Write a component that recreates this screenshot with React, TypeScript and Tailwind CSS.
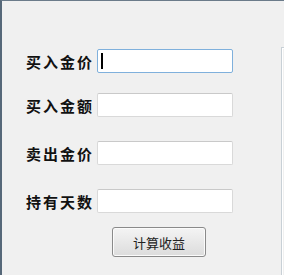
import React from "react";

const labelCls =
  "w-[71px] shrink-0 text-[15px] font-bold tracking-[2px] text-[#111] leading-none";
const inputCls =
  "w-[136px] h-[24px] bg-white border border-[#d9d9d9] border-t-[#c9c9c9] rounded-[2px]";

function Row({ label, focused, className }: { label: string; focused?: boolean; className?: string }) {
  return (
    <div className={"flex items-center " + (className ?? "")}>
      <div className={labelCls} style={{ fontFamily: '"Noto Sans CJK SC", sans-serif' }}>
        {label}
      </div>
      <div
        className={
          focused
            ? "w-[136px] h-[24px] bg-white border border-[#7fb0dc] rounded-[2px] flex items-center pl-[3px]"
            : inputCls
        }
      >
        {focused && <div className="w-[2px] h-[16px] bg-black" />}
      </div>
    </div>
  );
}

export default function App() {
  return (
    <div
      className="w-[284px] h-[275px] bg-[#f0f0f0] border-t border-l-2 border-t-[#6b7b8a] border-l-[#566879] flex overflow-hidden"
      style={{ fontFamily: '"Noto Sans CJK SC", sans-serif' }}
    >
      <div className="flex flex-col pl-[24px] pt-[48px] w-[279px]">
        <Row label="买入金价" focused />
        <Row label="买入金额" className="mt-[20px]" />
        <Row label="卖出金价" className="mt-[24px]" />
        <Row label="持有天数" className="mt-[24px]" />
        <div className="flex mt-[14px] pl-[86px]">
          <button className="w-[94px] h-[30px] rounded-[3px] border border-[#8a8a8a] bg-gradient-to-b from-[#f4f4f4] to-[#dcdcdc] text-[13px] text-[#222] leading-none shadow-[inset_0_0_0_1px_#fbfbfb]">
            计算收益
          </button>
        </div>
      </div>
      <div className="flex-1 mt-[46px] border-t border-l border-[#c8d0d6] shadow-[inset_1px_1px_0_#ffffff]" />
    </div>
  );
}
